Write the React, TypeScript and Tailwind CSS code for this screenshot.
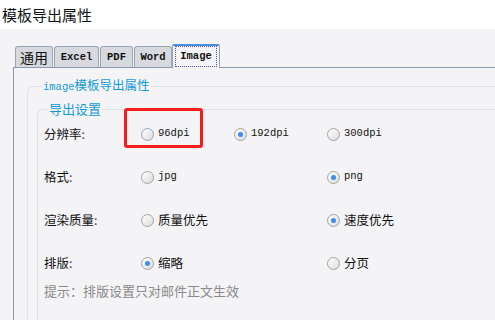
import React from "react";

const CJK = "font-['Noto_Sans_CJK_SC','Noto_Sans',sans-serif]";
const MONO = "font-['Liberation_Mono','Noto_Sans_CJK_SC',monospace]";

const TABS = [
  { label: "通用", w: "w-[38px]", cjk: true },
  { label: "Excel", w: "w-[45px]" },
  { label: "PDF", w: "w-[33px]" },
  { label: "Word", w: "w-[38px]" },
];

type Opt = { text: string; checked?: boolean; hover?: boolean; mono?: boolean; marked?: boolean };

const ROWS: { label: string; opts: (Opt | null)[] }[] = [
  {
    label: "分辨率",
    opts: [
      { text: "96dpi", mono: true, hover: true, marked: true },
      { text: "192dpi", mono: true, checked: true },
      { text: "300dpi", mono: true },
    ],
  },
  { label: "格式", opts: [{ text: "jpg", mono: true }, null, { text: "png", mono: true, checked: true }] },
  { label: "渲染质量", opts: [{ text: "质量优先" }, null, { text: "速度优先", checked: true }] },
  { label: "排版", opts: [{ text: "缩略", checked: true }, null, { text: "分页" }] },
];

function Radio({ checked, hover }: { checked?: boolean; hover?: boolean }) {
  return (
    <span
      className={
        "w-[13px] h-[13px] shrink-0 rounded-full border flex items-center justify-center bg-gradient-to-br from-[#ffffff] to-[#dcdcdc] " +
        (hover ? "border-[#8fa2c0]" : "border-[#a3a3a3]")
      }
    >
      {checked && <span className="w-[5px] h-[5px] rounded-full bg-[#3d8ef0]" />}
    </span>
  );
}

function Option({ opt }: { opt: Opt }) {
  return (
    <div className="relative flex items-center gap-[4px]">
      <Radio checked={opt.checked} hover={opt.hover} />
      <span className={opt.mono ? MONO + " text-[10.5px] text-[#111]" : "text-[12.5px] text-[#111]"}>{opt.text}</span>
      {opt.marked && (
        <div className="absolute left-[-17px] top-[-18px] w-[79px] h-[40px] border-[3px] border-[#f51c1c] rounded-[3px]" />
      )}
    </div>
  );
}

export default function App() {
  return (
    <div className={"w-[495px] h-[320px] overflow-hidden flex flex-col bg-[#f4f4f6] " + CJK}>
      <div className="h-[29px] shrink-0 bg-white flex items-center pl-[2px] text-[15px] text-[#111] leading-none">
        模板导出属性
      </div>

      <div className="flex-1 flex flex-col pl-[13px] pt-[14px]">
        <div className="flex items-end gap-[1px] pl-[2px] h-[24px]">
          {TABS.map((t) => (
            <div
              key={t.label}
              className={
                "h-[22px] -mb-[1px] flex items-center justify-center rounded-t-[3px] border border-b-0 border-[#9aa5b6] bg-[#d8d9de] text-[#111] " +
                t.w +
                (t.cjk ? " text-[14px]" : " " + MONO + " text-[10.5px] font-bold")
              }
            >
              {t.label}
            </div>
          ))}
          <div className="relative z-10 h-[24px] w-[48px] -mb-[1px] -ml-[1px] flex items-center justify-center rounded-t-[2px] border-x border-[#9aa5b6] border-t-2 border-t-[#4a90e2] bg-[#f4f4f6] px-[2px] pb-[1px]">
            <div className={"w-full h-full flex items-center justify-center border border-dotted border-[#5a4f9c] text-[10.5px] font-bold text-[#111] " + MONO}>
              Image
            </div>
          </div>
        </div>

        <div className="flex-1 border-t border-l border-[#8d9bb1] pl-[13px] pt-[8px]">
          <fieldset className="border-t border-l border-[#e1e1e4] rounded-tl-[6px] pl-[9px] h-full">
            <legend className="ml-[5px] px-[1px] text-[12.5px] leading-[17px] text-[#139ad8]">
              <span className={MONO + " text-[10.5px]"}>image</span>模板导出属性
            </legend>

            <fieldset className="mt-[4px] border-t border-l border-[#e1e1e4] rounded-tl-[6px] pl-[6px] h-full">
              <legend className="ml-[4px] px-[1px] text-[13px] leading-[18px] text-[#139ad8]">导出设置</legend>

              <div className="flex flex-col gap-[19px] pt-[4px]">
                {ROWS.map((r) => (
                  <div key={r.label} className="h-[24px] grid grid-cols-[97px_93px_93px_1fr] items-center">
                    <span className="text-[12.5px] text-[#111]">
                      {r.label}
                      <span className="text-[#6a2c5a]">:</span>
                    </span>
                    {r.opts.map((o, i) => (o ? <Option key={i} opt={o} /> : <span key={i} />))}
                  </div>
                ))}
              </div>

              <div className="mt-[7px] text-[13px] leading-[18px] text-[#8a8a8a]">提示：排版设置只对邮件正文生效</div>
            </fieldset>
          </fieldset>
        </div>
      </div>
    </div>
  );
}
